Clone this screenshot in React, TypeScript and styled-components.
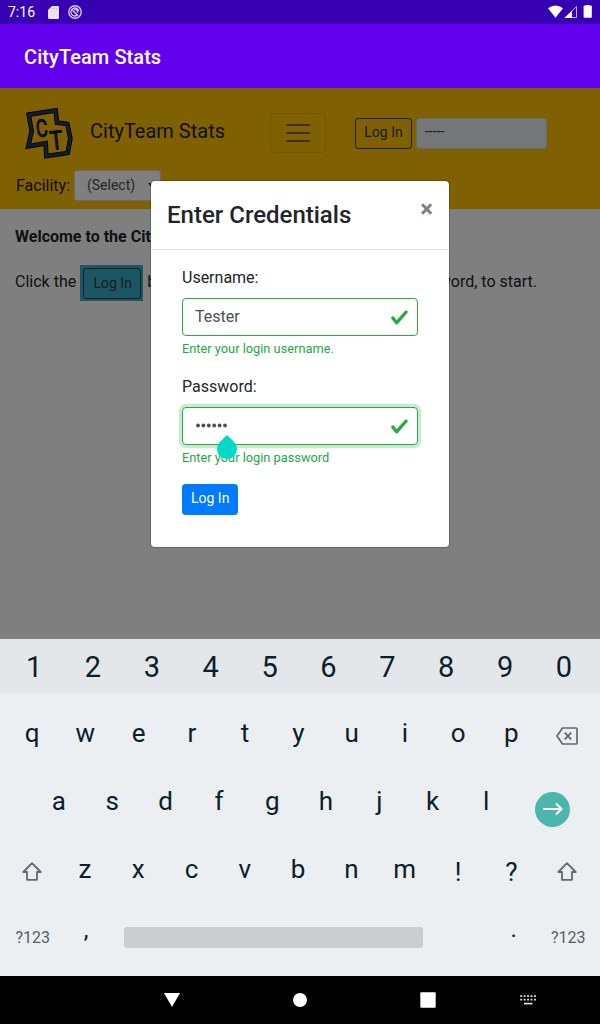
import React from "react";
import styled, { createGlobalStyle } from "styled-components";

const GlobalStyle = createGlobalStyle`
  *, *::before, *::after { box-sizing: border-box; }
  body {
    margin: 0;
    font-family: Roboto, "Liberation Sans", sans-serif;
    font-size: 16px;
    line-height: 1.5;
    color: #212529;
  }
  button, input, select { font-family: inherit; margin: 0; }
  svg { display: block; }
`;

const Screen = styled.div`
  width: 600px;
  height: 1024px;
  display: flex;
  flex-direction: column;
  overflow: hidden;
  background: #000;
`;

/* ---------- system bars ---------- */

const StatusBar = styled.header`
  height: 24px;
  flex: none;
  display: flex;
  align-items: center;
  padding: 0 6px 0 8px;
  background: #3700b3;
  color: #fff;
  font-size: 14px;
  line-height: 24px;
`;

const Clock = styled.span`
  width: 40px;
`;

const StatusIcons = styled.span`
  flex: 1;
  display: flex;
  align-items: center;
  gap: 9px;
`;

const AppBar = styled.div`
  height: 64px;
  flex: none;
  display: flex;
  align-items: center;
  padding: 2px 24px 0;
  background: #6200ee;
  color: #fff;
  font-size: 20px;
  font-weight: 500;
  letter-spacing: 0.07px;
`;

const SystemNav = styled.nav`
  height: 48px;
  flex: none;
  display: grid;
  grid-template-columns: 108px 128px 128px 128px 72px;
  justify-items: center;
  align-items: center;
  background: #000;
`;

/* ---------- web page ---------- */

const WebView = styled.main`
  position: relative;
  height: 551px;
  flex: none;
  background: #fff;
  overflow: hidden;
`;

const Navbar = styled.div`
  height: 121px;
  padding: 14px 16px 0;
  background: #ffc107;
`;

const NavRow = styled.div`
  display: flex;
  align-items: center;
  height: 62px;
`;

const Brand = styled.span`
  display: flex;
  align-items: center;
  width: 254px;
  padding-left: 4px;
  gap: 10px;
  font-size: 20px;
  color: rgba(0, 0, 0, 0.9);
  white-space: nowrap;
`;

const BrandName = styled.span`
  padding-bottom: 4px;
`;

const Toggler = styled.button`
  width: 56px;
  height: 40px;
  padding: 0 12px;
  background: transparent;
  border: 1px solid rgba(0, 0, 0, 0.1);
  border-radius: 4px;
`;

const outlineDark = "#343a40";

const SmallButton = styled.button<{ $variant: "outline" | "primary"; $low?: boolean }>`
  height: 31px;
  padding: ${(p) => (p.$low ? "3px 8px 3px 9px" : "2px 8px 4px")};
  font-size: 14px;
  line-height: 21px;
  border-radius: 3.2px;
  border: 1px solid ${(p) => (p.$variant === "primary" ? "#007bff" : outlineDark)};
  background: ${(p) => (p.$variant === "primary" ? "#007bff" : "transparent")};
  color: ${(p) => (p.$variant === "primary" ? "#fff" : outlineDark)};
`;

const NavForm = styled.div`
  display: grid;
  grid-template-columns: 57px 131px;
  gap: 4px;
  margin-left: 29px;
`;

const UserField = styled.div`
  height: 31px;
  padding: 2px 8px;
  font-size: 14px;
  line-height: 21px;
  color: ${outlineDark};
  background: #e9ecef;
  border: 1px solid #ced4da;
  border-radius: 3.2px;
`;

const FacilityRow = styled.div`
  display: flex;
  align-items: center;
  gap: 4px;
  height: 31px;
  margin-top: 6px;
  color: rgba(0, 0, 0, 0.9);
`;

const FacilitySelect = styled.div`
  display: flex;
  align-items: center;
  justify-content: space-between;
  width: 87px;
  height: 31px;
  padding: 0 4px 1px 12px;
  font-size: 14px;
  color: #495057;
  background: #fff;
  border: 1px solid #ced4da;
  border-radius: 3.2px;
`;

const Content = styled.section`
  padding: 16px 15px;
  white-space: nowrap;
`;

const Welcome = styled.p`
  margin: 0;
  font-weight: 700;
`;

const Instructions = styled.p`
  display: flex;
  align-items: center;
  height: 36px;
  margin: 16px 0 0;
`;

const Phrase = styled.span`
  padding-bottom: 2px;
`;

const InfoMark = styled.span`
  display: flex;
  align-items: center;
  justify-content: center;
  width: 63px;
  height: 36px;
  padding-left: 1px;
  margin: 0 4px;
  background: #38acc0;
`;

const Backdrop = styled.div`
  position: absolute;
  inset: 0;
  background: rgba(0, 0, 0, 0.5);
`;

/* ---------- dialog ---------- */

const Dialog = styled.section`
  position: absolute;
  left: 150px;
  top: 92px;
  width: 300px;
  height: 368px;
  background: #fff;
  background-clip: padding-box;
  border: 1px solid rgba(0, 0, 0, 0.2);
  border-radius: 4.8px;
`;

const DialogHeader = styled.header`
  display: flex;
  justify-content: space-between;
  height: 69px;
  padding: 16px;
  border-bottom: 1px solid #dee2e6;
`;

const DialogTitle = styled.h4`
  margin: 0;
  font-size: 24px;
  font-weight: 500;
  line-height: 36px;
`;

const CloseButton = styled.button`
  height: 24px;
  padding: 0;
  border: 0;
  background: transparent;
  color: #7f7f7f;
  font-size: 24px;
  font-weight: 700;
  line-height: 24px;
`;

const DialogBody = styled.form`
  padding: 16px 31px;
`;

const FormGroup = styled.div`
  position: relative;
  height: 93px;
  margin-bottom: 16px;
`;

const Label = styled.label`
  display: block;
  height: 24px;
  margin-bottom: 8px;
`;

const ValidField = styled.div<{ $focused?: boolean }>`
  display: flex;
  align-items: center;
  justify-content: space-between;
  height: 38px;
  padding: 0 8.5px 0 12px;
  color: #495057;
  border: 1px solid #28a745;
  border-radius: 4px;
  box-shadow: ${(p) => (p.$focused ? "0 0 0 3.2px rgba(40, 167, 69, 0.25)" : "none")};
`;

const Feedback = styled.div`
  margin-top: 3px;
  font-size: 12.8px;
  line-height: 19.2px;
  color: #28a745;
`;

const Dots = styled.span`
  padding-left: 0.5px;
`;

const CursorHandle = styled.svg`
  position: absolute;
  left: 34px;
  top: 60px;
`;

/* ---------- keyboard ---------- */

const Keyboard = styled.section`
  height: 337px;
  flex: none;
  display: flex;
  flex-direction: column;
  background: #ebeff2;
  color: #0a212b;
`;

const NumberRow = styled.div`
  display: flex;
  height: 54px;
  padding: 0 6.5px 0 4.7px;
  background: #e4e7ea;
  font-size: 29px;
`;

const KeyRow = styled.div<{ $inset?: number; $endInset?: number }>`
  display: flex;
  height: 68px;
  padding: 0 ${(p) => p.$endInset ?? 4}px 0 ${(p) => p.$inset ?? 5.5}px;
  font-size: 26px;
`;

const Key = styled.div<{ $span?: number; $drop?: number; $lift?: number }>`
  flex: ${(p) => p.$span ?? 1} 1 0;
  min-width: 0;
  display: flex;
  align-items: center;
  justify-content: center;
  padding-top: ${(p) => p.$drop ?? 12}px;
  padding-bottom: ${(p) => p.$lift ?? 0}px;
  line-height: 1;
`;

const SymbolsKey = styled(Key)`
  padding-top: 13px;
  font-size: 16px;
  color: #50616b;
`;

const PunctuationKey = styled(Key)`
  font-size: 24px;
`;

const SpaceBar = styled.div`
  width: 299px;
  height: 21px;
  border-radius: 3px;
  background: #c9cdd0;
`;

const EnterKey = styled.div`
  width: 35px;
  height: 35px;
  display: flex;
  align-items: center;
  justify-content: center;
  border-radius: 50%;
  background: #4db6ac;
`;

/* ---------- icons ---------- */

const SdCardIcon = () => (
  <svg width="11" height="13" viewBox="0 0 12 14" fill="#e9e3f7">
    <path d="M4.2 0H10.8Q12 0 12 1.2V12.8Q12 14 10.8 14H1.2Q0 14 0 12.8V4.2Z" />
    <path d="M4.7 2v1.6M7 2v1.6M9.3 2v1.6" stroke="#b9a9e2" strokeWidth="1" />
  </svg>
);

const DebugIcon = () => (
  <svg width="14" height="14" viewBox="0 0 14 14" fill="none" stroke="#d4c8ef">
    <circle cx="7" cy="7" r="6.2" strokeWidth="1.4" />
    <path d="M9.8 9.8A4 4 0 1 1 10.8 6" strokeWidth="1.3" />
    <path d="M4.4 5.2l5.6 5.6M6 4.6a2.5 2.5 0 0 1 3.4 3.2" strokeWidth="1.6" />
  </svg>
);

const SignalIcons = () => (
  <svg width="46" height="14" viewBox="0 0 46 14" fill="#fff">
    <path d="M0 3.2Q7.5-2.4 15 3.2L7.5 12.7Z" />
    <path d="M17.6 12.5 28.5 1.6V12.5Z" fill="none" stroke="#c3b2e8" />
    <path d="M16.4 13 24 5.4V13Z" />
    <path d="M36.3 .6h1.8V-.6h3.2V.6h1.8q.7 0 .7.7V12q0 .8-.7.8H36.3q-.7 0-.7-.8V1.3q0-.7.7-.7Z" />
  </svg>
);

const CityTeamLogo = () => (
  <svg width="60" height="60" viewBox="0 0 180 180">
    <path
      d="M26 35 107 22 111 59 142 63 151 106 143 150 79 159 77 121 25 130 35 83Z"
      fill="none"
      stroke="#05070d"
      strokeWidth="14"
    />
    <path
      d="M26 35 107 22 111 59 142 63 151 106 143 150 79 159 77 121 25 130 35 83Z"
      fill="none"
      stroke="#28365e"
      strokeWidth="9"
    />
    <g fill="#1c2748" stroke="#0c1222" strokeWidth="3" fontFamily="Roboto, sans-serif" fontWeight="400">
      <text fontSize="72" transform="translate(51 103) rotate(-7) scale(.74 1)">C</text>
      <text fontSize="78" transform="translate(92 141) rotate(-6) scale(.84 1)">T</text>
    </g>
  </svg>
);

const MenuIcon = () => (
  <svg width="30" height="30" viewBox="0 0 30 30">
    <path d="M4 7h22M4 15h22M4 23h22" stroke="rgba(0,0,0,.5)" strokeWidth="2" strokeLinecap="round" />
  </svg>
);

const CheckIcon = () => (
  <svg width="19" height="19" viewBox="0 0 8 8">
    <path
      fill="#28a745"
      d="M2.3 6.73.6 4.53c-.4-1.04.46-1.4 1.1-.8l1.1 1.4 3.4-3.8c.6-.63 1.6-.27 1.2.7l-4 4.6c-.43.5-.8.4-1.1.1z"
    />
  </svg>
);

const PasswordDots = () => (
  <svg width="32" height="6" viewBox="0 0 32 6" fill="#495057">
    {[0, 1, 2, 3, 4, 5].map((n) => (
      <circle key={n} cx={2 + n * 5.4} cy="2.5" r="1.9" />
    ))}
  </svg>
);

const BackspaceIcon = () => (
  <svg width="22" height="18" viewBox="0 0 22 18" fill="none" stroke="#5c6b74" strokeWidth="1.7" strokeLinejoin="round">
    <path d="M6.5 1H20q1 0 1 1V16q0 1-1 1H6.5L1 9Z" />
    <path d="M8.8 5.7l6.4 6.6M15.2 5.7 8.8 12.3" strokeWidth="1.9" />
  </svg>
);

const ShiftIcon = () => (
  <svg width="20" height="19" viewBox="0 0 20 19" fill="none" stroke="#5c6b74" strokeWidth="1.8" strokeLinejoin="round">
    <path d="M10 1.2 18.7 10H15V17.8H5V10H1.3Z" />
  </svg>
);

const ArrowIcon = () => (
  <svg width="20" height="14" viewBox="0 0 20 14" fill="none" stroke="#fff" strokeWidth="2">
    <path d="M.3 7H18.3M13 1.5 18.5 7 13 12.5" />
  </svg>
);

const KeyboardIcon = () => (
  <svg width="16" height="10" viewBox="0 0 16 10" stroke="#ddd" strokeWidth="1.7">
    <path d="M.2 1.2H16M.2 4.7H16" strokeDasharray="1.9 1.55" />
    <path d="M4 8.6H12.5" />
  </svg>
);

const App = () => (
  <Screen>
    <GlobalStyle />
    <StatusBar>
      <Clock>7:16</Clock>
      <StatusIcons>
        <SdCardIcon />
        <DebugIcon />
      </StatusIcons>
      <SignalIcons />
    </StatusBar>
    <AppBar>CityTeam Stats</AppBar>

    <WebView>
      <Navbar>
        <NavRow>
          <Brand>
            <CityTeamLogo />
            <BrandName>CityTeam Stats</BrandName>
          </Brand>
          <Toggler>
            <MenuIcon />
          </Toggler>
          <NavForm>
            <SmallButton $variant="outline">Log In</SmallButton>
            <UserField>-----</UserField>
          </NavForm>
        </NavRow>
        <FacilityRow>
          <span>Facility:</span>
          <FacilitySelect>
            (Select)
            <svg width="8" height="5" viewBox="0 0 8 5">
              <path d="M0 0H8L4 5Z" fill="#343a40" />
            </svg>
          </FacilitySelect>
        </FacilityRow>
      </Navbar>
      <Content>
        <Welcome>Welcome to the CityTeam Stats Application!</Welcome>
        <Instructions>
          <Phrase>Click the</Phrase>
          <InfoMark>
            <SmallButton $variant="outline" $low>
              Log In
            </SmallButton>
          </InfoMark>
          <Phrase>button</Phrase>
          <Phrase>and enter your username and password, to start.</Phrase>
        </Instructions>
      </Content>
      <Backdrop />
      <Dialog>
        <DialogHeader>
          <DialogTitle>Enter Credentials</DialogTitle>
          <CloseButton>×</CloseButton>
        </DialogHeader>
        <DialogBody>
          <FormGroup>
            <Label>Username:</Label>
            <ValidField>
              Tester
              <CheckIcon />
            </ValidField>
            <Feedback>Enter your login username.</Feedback>
          </FormGroup>
          <FormGroup>
            <Label>Password:</Label>
            <ValidField $focused>
              <Dots>
                <PasswordDots />
              </Dots>
              <CheckIcon />
            </ValidField>
            <Feedback>Enter your login password</Feedback>
            <CursorHandle width="22" height="25" viewBox="0 0 22 25">
              <path d="M11 0 18.2 7.1A10 10 0 1 1 3.8 7.1Z" fill="#03dac5" />
            </CursorHandle>
          </FormGroup>
          <SmallButton $variant="primary" type="button">
            Log In
          </SmallButton>
        </DialogBody>
      </Dialog>
    </WebView>

    <Keyboard>
      <NumberRow>
        {[..."1234567890"].map((c) => (
          <Key key={c} $drop={3}>
            {c}
          </Key>
        ))}
      </NumberRow>
      <KeyRow>
        {[..."qwertyuiop"].map((c) => (
          <Key key={c}>{c}</Key>
        ))}
        <Key $span={1.088} $drop={17}>
          <BackspaceIcon />
        </Key>
      </KeyRow>
      <KeyRow $inset={32} $endInset={7}>
        {[..."asdfghjkl"].map((c) => (
          <Key key={c}>{c}</Key>
        ))}
        <Key $span={1.5} $drop={28}>
          <EnterKey>
            <ArrowIcon />
          </EnterKey>
        </Key>
      </KeyRow>
      <KeyRow $inset={5}>
        <Key $drop={16}>
          <ShiftIcon />
        </Key>
        {[..."zxcvbnm"].map((c) => (
          <Key key={c}>{c}</Key>
        ))}
        <Key $drop={17}>!</Key>
        <Key $drop={17}>?</Key>
        <Key $span={1.088} $drop={16}>
          <ShiftIcon />
        </Key>
      </KeyRow>
      <KeyRow $inset={6}>
        <SymbolsKey>?123</SymbolsKey>
        <PunctuationKey $drop={0} $lift={3}>,</PunctuationKey>
        <Key $span={6} $drop={13}>
          <SpaceBar />
        </Key>
        <Key />
        <PunctuationKey $drop={0} $lift={5}>.</PunctuationKey>
        <SymbolsKey $span={1.04}>?123</SymbolsKey>
      </KeyRow>
    </Keyboard>

    <SystemNav>
      <span />
      <svg width="16" height="14" viewBox="0 0 16 14">
        <path d="M0 0H16L8 14Z" fill="#fff" />
      </svg>
      <svg width="14" height="14" viewBox="0 0 14 14">
        <circle cx="7" cy="7" r="7" fill="#fff" />
      </svg>
      <svg width="16" height="16" viewBox="0 0 16 16">
        <rect x=".3" y=".3" width="15.4" height="15.4" rx="1" fill="#fff" />
      </svg>
      <KeyboardIcon />
    </SystemNav>
  </Screen>
);

export default App;
